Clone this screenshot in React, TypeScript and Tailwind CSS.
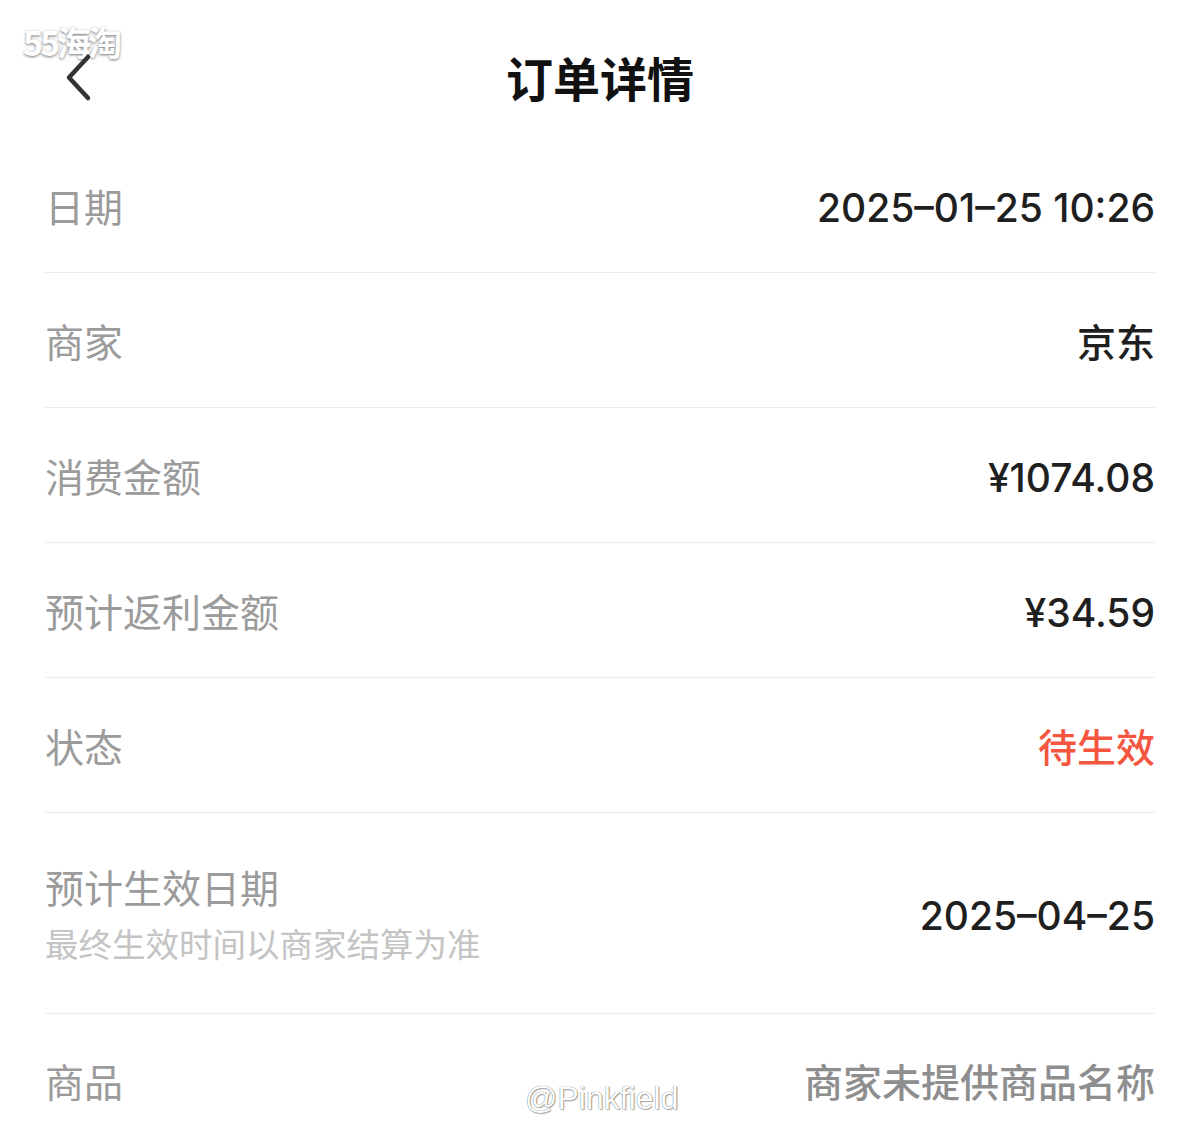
import React from "react";

function Row({ label, value, valueClass }: { label: string; value: string; valueClass: string }) {
  return (
    <div className="flex h-[135px] items-center justify-between border-b border-[#ececec]">
      <span className="text-[39px] leading-none text-[#9b9b9b]">{label}</span>
      <span className={valueClass}>{value}</span>
    </div>
  );
}

const numCls = "pt-[5px] font-['Inter','Noto_Sans_CJK_SC',sans-serif] text-[39px] font-medium leading-none text-[#1f1f1f]";
const cjkVal = "text-[39px] font-medium leading-none text-[#1f1f1f]";

export default function App() {
  return (
    <div className="relative h-[1147px] w-[1200px] overflow-hidden bg-white font-['Noto_Sans_CJK_SC','Noto_Sans',sans-serif]">
      <div className="absolute left-[23px] top-[25px] text-[34px] font-bold leading-none tracking-[-3px] text-white [text-shadow:0_1px_3px_rgba(0,0,0,0.55)]">55海淘</div>
      <header className="relative flex h-[138px] items-center justify-center">
        <svg className="absolute left-[62px] top-[52px]" width="36" height="52" viewBox="0 0 36 52" fill="none">
          <polyline points="26,5 7,25.5 26,46" stroke="#333" strokeWidth="4.5" strokeLinecap="round" strokeLinejoin="round" />
        </svg>
        <h1 className="pt-[14px] text-[47px] font-bold leading-none text-[#111]">订单详情</h1>
      </header>
      <main className="px-[45px]">
        <Row label="日期" value="2025–01–25 10:26" valueClass={numCls} />
        <Row label="商家" value="京东" valueClass={cjkVal} />
        <Row label="消费金额" value="¥1074.08" valueClass={numCls} />
        <Row label="预计返利金额" value="¥34.59" valueClass={numCls} />
        <Row label="状态" value="待生效" valueClass="text-[39px] font-medium leading-none text-[#f4563f]" />
        <div className="flex h-[201px] items-center justify-between border-b border-[#ececec]">
          <div className="flex flex-col gap-[20px]">
            <span className="text-[39px] leading-none text-[#9b9b9b]">预计生效日期</span>
            <span className="text-[33.5px] leading-none text-[#c4c4c4]">最终生效时间以商家结算为准</span>
          </div>
          <span className={numCls}>2025–04–25</span>
        </div>
        <div className="flex h-[132px] items-center justify-between">
          <span className="text-[39px] leading-none text-[#9b9b9b]">商品</span>
          <span className="text-[39px] font-medium leading-none text-[#8e8e8e]">商家未提供商品名称</span>
        </div>
      </main>
      <div className="absolute left-[525px] top-[1082px] font-['Liberation_Sans',sans-serif] text-[32px] leading-none text-white [text-shadow:0_0_1px_rgba(0,0,0,0.7),1px_1px_1px_rgba(0,0,0,0.3)]">@Pinkfield</div>
    </div>
  );
}
